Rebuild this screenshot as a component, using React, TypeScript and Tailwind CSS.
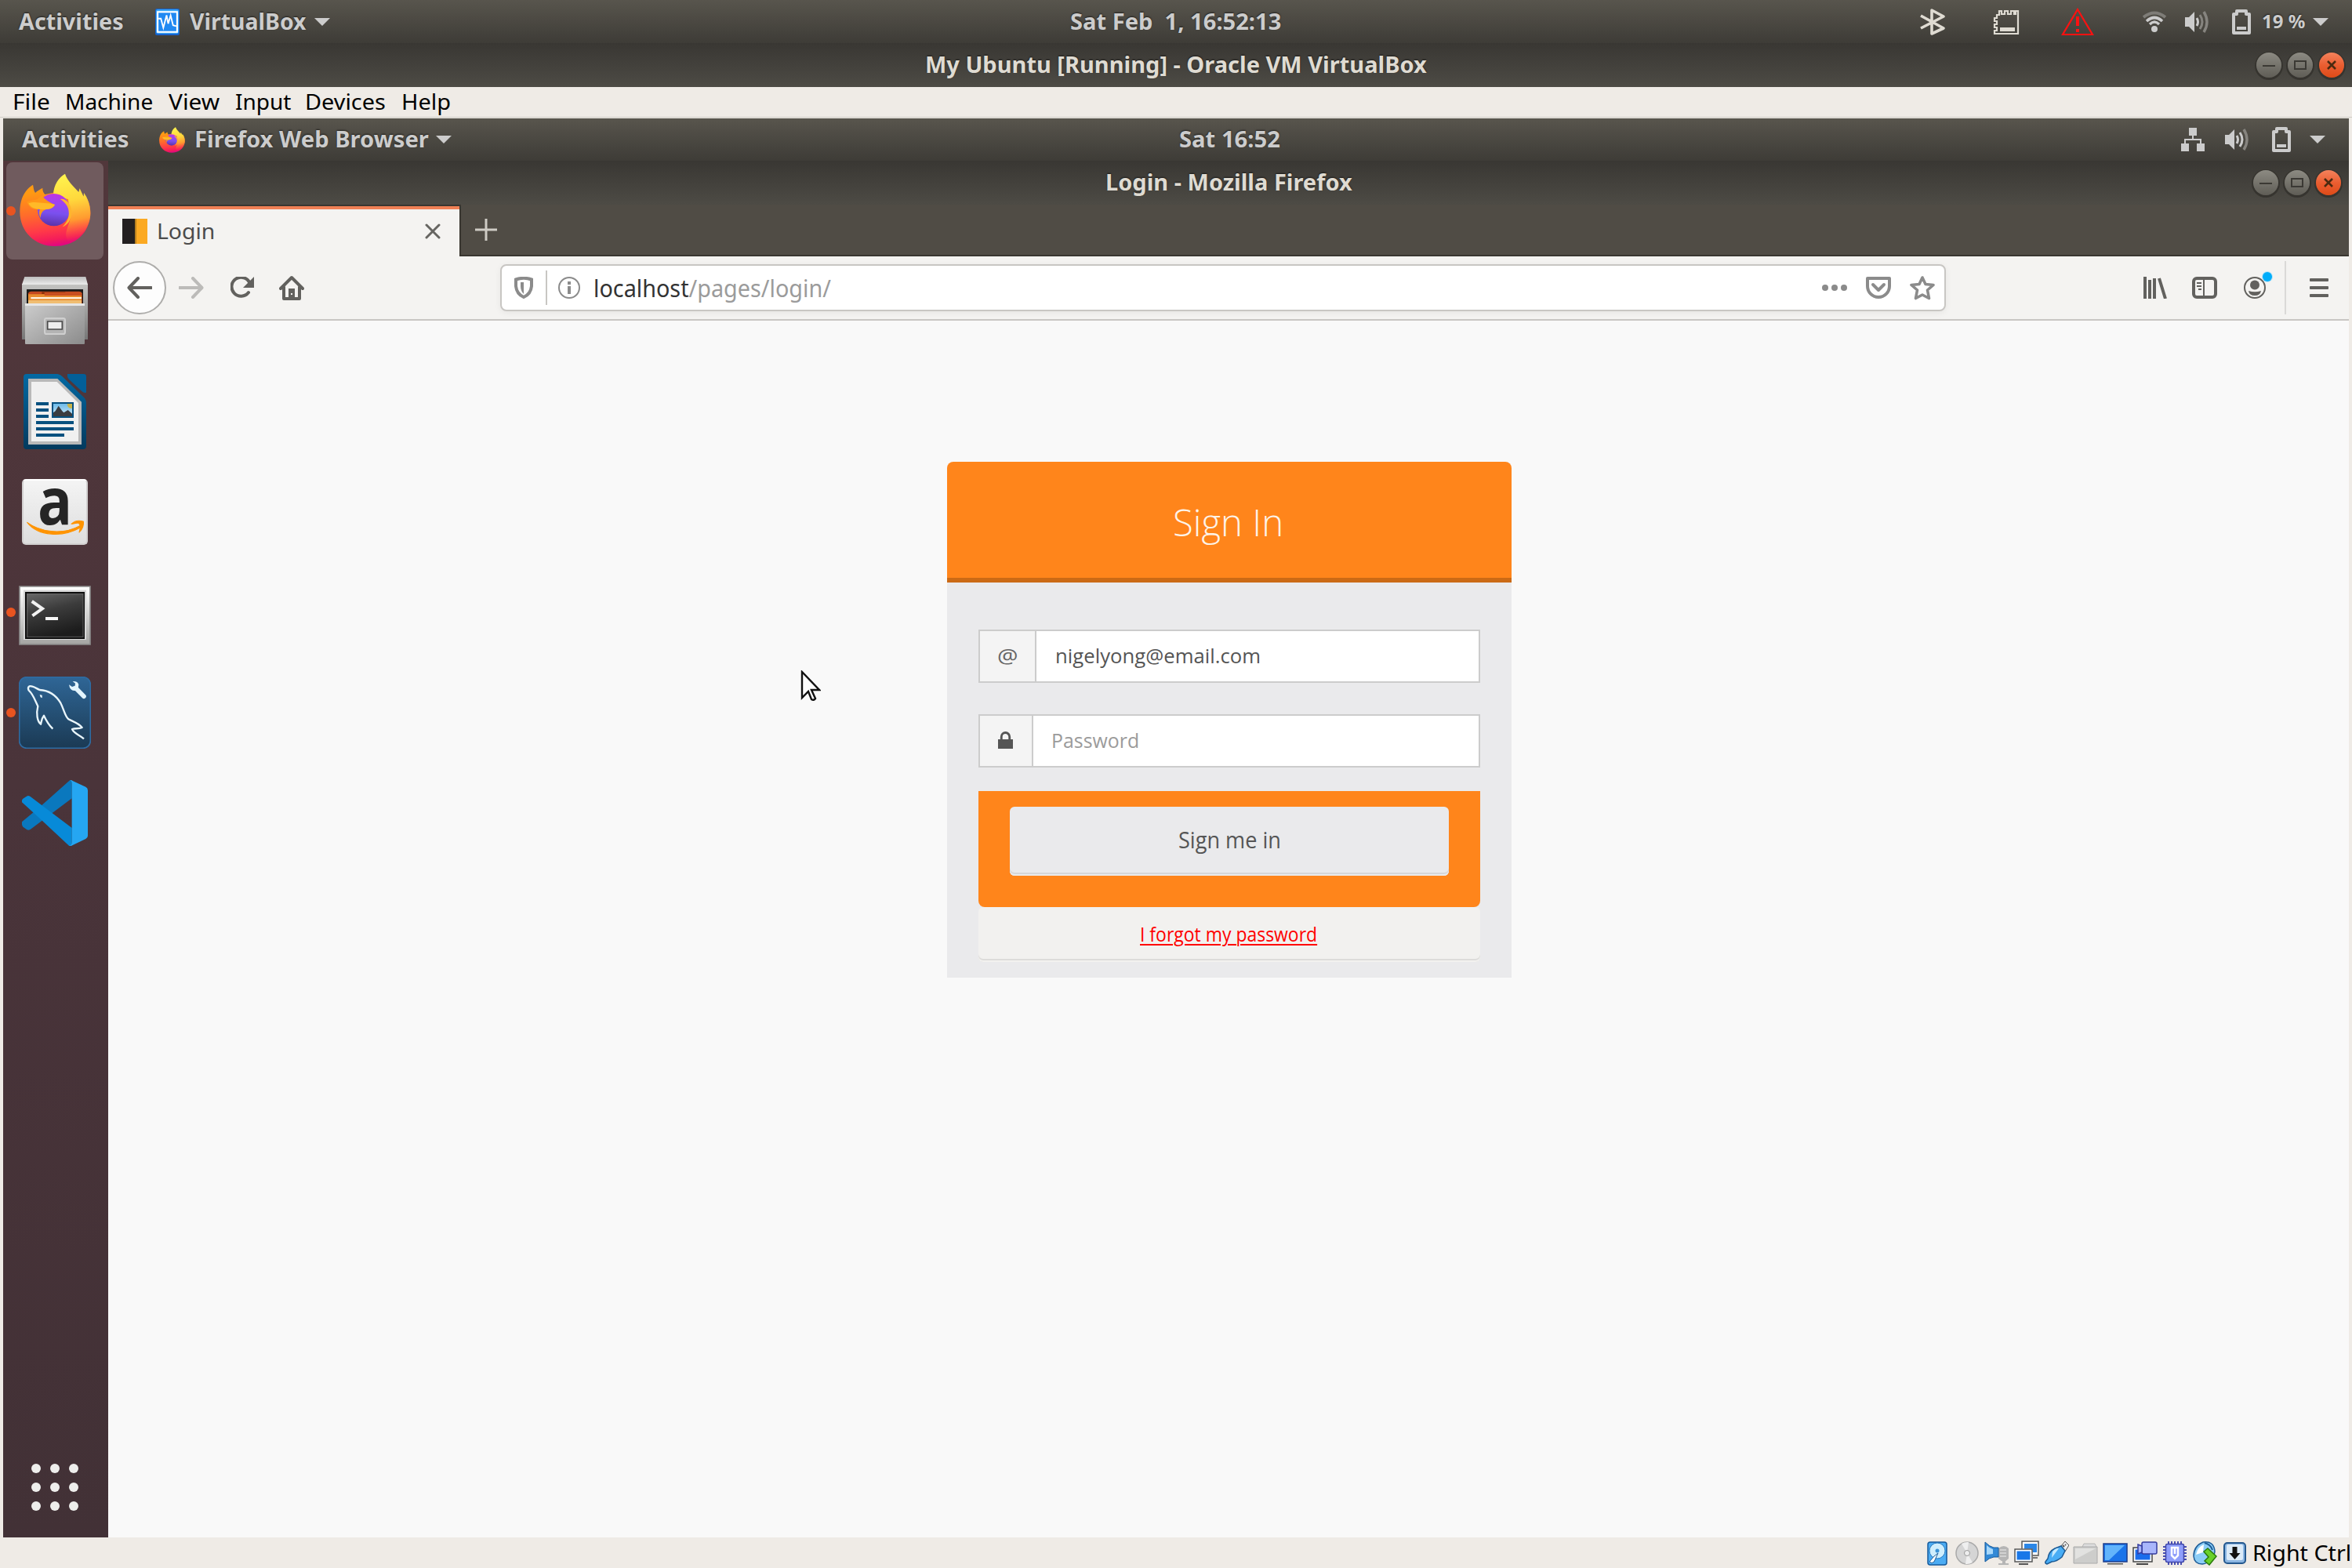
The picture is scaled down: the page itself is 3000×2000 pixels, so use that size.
import { useLayoutEffect, useRef, type ReactNode } from "react";

/* Text run condensed or widened to fill the width given by its class. */
function Fit({ className, textClass = "", children }: { className: string; textClass?: string; children: ReactNode }) {
  const outer = useRef<HTMLSpanElement>(null);
  const inner = useRef<HTMLSpanElement>(null);
  useLayoutEffect(() => {
    if (outer.current && inner.current) {
      const ratio = outer.current.clientWidth / inner.current.offsetWidth;
      inner.current.style.transform = `scaleX(${ratio})`;
    }
  });
  return (
    <span ref={outer} className={"block shrink-0 " + className}>
      <span ref={inner} className={"inline-block origin-left whitespace-pre " + textClass}>
        {children}
      </span>
    </span>
  );
}

function Svg({ vb, className, children }: { vb: string; className: string; children: ReactNode }) {
  return (
    <svg viewBox={vb} preserveAspectRatio="none" fill="none" className={"block shrink-0 " + className}>
      {children}
    </svg>
  );
}

const Caret = ({ className }: { className: string }) => (
  <Svg vb="0 0 20 10" className={"h-[10px] w-[20px] " + className}>
    <path d="M0 0h20L10 10z" fill="#ccc" />
  </Svg>
);

function Volume({ loud, className }: { loud?: boolean; className: string }) {
  return (
    <Svg vb="0 0 30 28" className={"h-[28px] w-[30px] " + className}>
      <path d="M0 8h5l7-7v26l-7-7H0z" fill="#ccc" />
      <path d="M15 9q3 5 0 10" stroke="#ccc" strokeWidth="3" />
      <path d="M19 5q6 9 0 18" stroke={loud ? "#ccc" : "#86847f"} strokeWidth="3" />
      <path d="M24 1q8 13 0 26" stroke="#86847f" strokeWidth="3.4" />
    </Svg>
  );
}

const Battery = ({ className }: { className: string }) => (
  <Svg vb="0 0 24 32" className={"h-[32px] w-[24px] " + className}>
    <path d="M2 30V6h4V2h12v4h4v24z" stroke="#ccc" strokeWidth="4" strokeLinejoin="round" />
    <path d="M6 22h12v4H6z" fill="#ccc" />
  </Svg>
);

function WindowButtons({ className }: { className: string }) {
  const base = "flex size-[32px] items-center justify-center rounded-full shadow-[0_1px_0_2px_#36342f]";
  const grey = base + " bg-linear-to-b from-[#8d8b83] to-[#5f5d56]";
  return (
    <div className={"flex shrink-0 gap-2 " + className}>
      <div className={grey}>
        <div className="mt-[2px] h-[2px] w-[16px] bg-[#3b3934]" />
      </div>
      <div className={grey}>
        <div className="h-[12px] w-[16px] border-2 border-[#3b3934]" />
      </div>
      <div className={base + " bg-linear-to-b from-[#f5825b] via-[#ea5e31] to-[#df4a16]"}>
        <Svg vb="0 0 12 12" className="size-[12px]">
          <path d="M1 1l10 10M11 1L1 11" stroke="#4b2a10" strokeWidth="2.6" />
        </Svg>
      </div>
    </div>
  );
}

function Firefox({ className, id }: { className: string; id: string }) {
  return (
    <Svg vb="76 91 273 282" className={className}>
      <defs>
        <linearGradient id={id + "b"} x1="0.35" y1="0.1" x2="0.5" y2="1">
          <stop offset="0" stopColor="#ff9a12" />
          <stop offset="0.4" stopColor="#ff6a2c" />
          <stop offset="0.7" stopColor="#ff3a48" />
          <stop offset="0.88" stopColor="#f41c5a" />
          <stop offset="1" stopColor="#e00683" />
        </linearGradient>
        <linearGradient id={id + "y"} x1="0.3" y1="0" x2="0.4" y2="1">
          <stop offset="0" stopColor="#fff44f" />
          <stop offset="0.4" stopColor="#ffd83c" />
          <stop offset="0.7" stopColor="#ff9a30" />
          <stop offset="1" stopColor="#ff4a44" stopOpacity="0" />
        </linearGradient>
        <linearGradient id={id + "g"} x1="0.5" y1="0" x2="0.4" y2="1">
          <stop offset="0" stopColor="#c034e4" />
          <stop offset="0.3" stopColor="#9a45f2" />
          <stop offset="0.6" stopColor="#7a50ee" />
          <stop offset="1" stopColor="#5a32a6" />
        </linearGradient>
      </defs>
      <path d="M127 135C130 146 129 156 136 166C143 158 154 153 164 147C163 157 167 166 173 172L206 165L300 163L335 190C348 215 349 245 345 262C335 330 280 370 210 370C135 370 77 315 77 238C77 190 95 155 127 135z" fill={`url(#${id}b)`} />
      <path d="M205 178C204 135 228 105 250 93C258 120 282 140 302 163L306 149C310 158 314 166 321 180L322 166C346 198 350 240 345 265C336 310 300 345 265 352C240 330 262 300 270 265L262 190z" fill={`url(#${id}y)`} />
      <circle cx="207" cy="231" r="62" fill={`url(#${id}g)`} />
      <path d="M173 172C160 176 150 183 145 190L104 200C112 225 130 232 154 228C150 238 150 250 156 262C157 240 168 231 180 228C196 228 205 222 211 211C195 205 178 195 165 182z" fill="#ff9718" />
      <path d="M110 206C130 198 150 204 170 205C185 206 198 206 211 211C205 223 196 228 180 229C150 232 120 228 110 206z" fill="#ffb928" />
      <path d="M232 190C250 186 272 205 275 235C276 270 258 290 240 296C264 272 268 248 262 226C258 212 246 200 232 190z" fill="#ffb52e" />
    </Svg>
  );
}

const RunningDot = ({ className }: { className: string }) => (
  <span className={"absolute top-1/2 left-[4px] size-[12px] rounded-full bg-[#e95420] " + className} />
);

function DockItem({ className, children }: { className: string; children: ReactNode }) {
  return <div className={"relative flex w-[134px] shrink-0 justify-center " + className}>{children}</div>;
}

function Dock() {
  return (
    <aside className="flex w-[134px] shrink-0 flex-col bg-linear-to-b from-[#51373b] via-[#4a343a] via-45% to-[#423136]">
      <DockItem className="mt-[2px] h-[124px]">
        <div className="ml-[-2px] h-[124px] w-[124px] rounded-lg bg-[#705b5e] pt-[14px] pl-[17px]">
          <Firefox id="dock" className="h-[94px] w-[91px]" />
        </div>
        <RunningDot className="-mt-[6px]" />
      </DockItem>
      <DockItem className="mt-[22px] h-[88px] pr-[2px]">
        <Svg vb="84 489 252 264" className="h-[88px] w-[84px]">
          <defs>
            <linearGradient id="cab" x1="0" y1="0" x2="0" y2="1"><stop stopColor="#c4c4c2" /><stop offset="1" stopColor="#777" /></linearGradient>
            <linearGradient id="drw" x1="0" y1="0" x2="1" y2="1"><stop stopColor="#cdcdcd" /><stop offset="1" stopColor="#8b8b8b" /></linearGradient>
            <linearGradient id="top" x1="0" y1="0" x2="0" y2="1"><stop stopColor="#bdbdbd" /><stop offset="1" stopColor="#ececec" /></linearGradient>
          </defs>
          <path d="M84 516h252v213H84z" fill="url(#cab)" />
          <path d="M94 489h234l8 30H84z" fill="url(#top)" />
          <path d="M102 537h216v60H102z" fill="#1c1c1c" />
          <path d="M108 553q2-8 12-8h182q10 0 12 8v44H108z" fill="#c4481f" />
          <path d="M160 547h90v8h-90z" fill="#8c2f08" />
          <path d="M108 556h204v40H108z" fill="#e88b2e" />
          <path d="M170 549h142v12H170z" fill="#c94f20" />
          <path d="M118 567h98v7h-98zM216 567h96v7h-96z" fill="#fff1e0" />
          <path d="M108 579h204v13H108z" fill="#f0bd72" />
          <rect x="96" y="591" width="228" height="156" rx="3" fill="url(#drw)" />
          <path d="M96 591h228v9H96z" fill="#e6e6e6" />
          <rect x="171" y="648" width="78" height="60" rx="7" fill="#b4b4b4" stroke="#cfcfcf" strokeWidth="6" />
          <path d="M182 660h56v30h-56z" fill="#ededed" stroke="#484848" strokeWidth="5" />
        </Svg>
      </DockItem>
      <DockItem className="mt-[36px] h-[96px] pr-[2px]">
        <Svg vb="90 861 240 288" className="h-[96px] w-[80px]">
          <defs>
            <linearGradient id="wr" x1="0" y1="0" x2="0" y2="1"><stop stopColor="#0369a3" /><stop offset="1" stopColor="#033a5e" /></linearGradient>
            <linearGradient id="sky" x1="0" y1="0" x2="0" y2="1"><stop stopColor="#67b7e8" /><stop offset="1" stopColor="#d5edf8" /></linearGradient>
          </defs>
          <path d="M102 861H220Q232 863 240 872L322 952Q330 960 330 972V1137Q330 1149 318 1149H102Q90 1149 90 1137V873Q90 861 102 861z" fill="url(#wr)" />
          <path d="M258 861H320Q330 861 330 871V932Q322 936 312 926L264 882Q256 874 258 861z" fill="#035f98" />
          <path d="M108 879H220L312 968V1131H108z" fill="#b9b9b9" />
          <path d="M120 891H218L300 972V1119H120z" fill="#f0f0f0" />
          <path d="M138 969h48v12h-48zM138 993h48v12h-48zM138 1017h48v12h-48zM138 1041h144v12H138zM138 1065h144v12H138zM138 1089h108v12H138z" fill="#07507f" />
          <path d="M201 972h78v54h-78z" fill="url(#sky)" stroke="#07507f" strokeWidth="6" />
          <path d="M257 975h19v18q-19 0-19-18z" fill="#c8b44a" />
          <path d="M204 1023v-14l8-6 12-20 14 20 6 6 16-10 16 14v10z" fill="#3a3c40" />
        </Svg>
      </DockItem>
      <DockItem className="mt-[38px] h-[84px] pr-[2px]">
        <div className="flex h-[84px] w-[84px] flex-col items-center rounded-[5px] border-2 border-[#d2d0d0] border-t-white bg-linear-to-b from-[#f4f4f4] to-[#dedede]">
          <Fit className="h-[50px] w-[44px] font-['Open_Sans',sans-serif] text-[83px] leading-[48px] font-bold text-[#252525]">a</Fit>
          <Svg vb="102 1420 218 60" className="h-[20px] w-[73px]">
            <path d="M104 1430C150 1464 235 1482 306 1442L300 1432C285 1434 278 1436 272 1436C286 1422 305 1422 319 1427C319 1444 314 1458 302 1468L306 1450C240 1488 145 1484 104 1430z" fill="#ff9400" stroke="#ff9400" strokeWidth="3" strokeLinejoin="round" />
          </Svg>
        </div>
      </DockItem>
      <DockItem className="mt-[52px] h-[76px] pr-[2px]">
        <RunningDot className="-mt-[10px]" />
        <Svg vb="72 141 276 228" className="h-[76px] w-[92px]">
          <defs>
            <linearGradient id="tf" x1="0" y1="0" x2="0" y2="1"><stop stopColor="#fff" /><stop offset="1" stopColor="#a4a4a2" /></linearGradient>
            <linearGradient id="ts" x1="0" y1="0" x2="0.3" y2="1"><stop stopColor="#6a6a6a" /><stop offset="0.45" stopColor="#3c3c3c" /><stop offset="1" stopColor="#1c1c1c" /></linearGradient>
          </defs>
          <path d="M75 144h270v222H75z" fill="url(#tf)" stroke="#8c8c8c" strokeWidth="5" />
          <path d="M90 158h240v190H90z" fill="#d6d6d6" />
          <path d="M99 168h222v174H99z" fill="url(#ts)" stroke="#0e0e0e" strokeWidth="6" />
          <path d="M104 173h214v164H104z" stroke="#6e6e6e" strokeOpacity="0.6" strokeWidth="4" />
          <path d="M122 201L162 229L124 256" stroke="#f2f2f2" strokeWidth="12" />
          <path d="M174 261h48v12h-48z" fill="#f8f8f8" />
        </Svg>
      </DockItem>
      <DockItem className="mt-[40px] h-[92px] pr-[2px]">
        <RunningDot className="-mt-[6px]" />
        <Svg vb="72 489 276 276" className="h-[92px] w-[92px]">
          <defs>
            <linearGradient id="my" x1="0" y1="0" x2="0" y2="1"><stop stopColor="#2f6696" /><stop offset="1" stopColor="#1b3a54" /></linearGradient>
          </defs>
          <rect x="74" y="491" width="272" height="272" rx="28" fill="url(#my)" stroke="#2e6ca3" strokeWidth="5" />
          <path d="M110 542C104 528 112 522 124 527C135 530 142 536 152 540C190 542 215 562 232 590C245 615 248 640 262 652C280 662 298 664 314 684C300 690 288 686 276 690C284 708 305 712 321 727M110 542C126 555 134 580 145 602C138 630 142 660 156 671C160 655 160 648 168 638C178 660 188 675 202 689" stroke="#e9f6fc" strokeWidth="7" strokeLinejoin="round" />
          <path d="M152 558l9 2v11l-6-3z" fill="#e9f6fc" />
          <path d="M290 533l31 32" stroke="#e3f4fd" strokeWidth="17" strokeLinecap="round" />
          <path d="M278 507Q298 506 301 520L299 534L288 543Q268 546 264 520L276 528L287 524L288 515z" fill="#e3f4fd" />
        </Svg>
      </DockItem>
      <DockItem className="mt-[40px] h-[84px] pr-[2px]">
        <Svg vb="84 885 252 252" className="h-[84px] w-[84px]">
          <path d="M268 885L150 990L84 1045Q82 1056 88 1064L102 1074Q108 1078 116 1074L275 955V887z" fill="#0a78be" />
          <path d="M84 970Q82 962 88 956L102 947Q108 943 116 948L275 1068V1134Q270 1138 264 1136L150 1030z" fill="#078ad8" />
          <path d="M268 885Q272 884 278 888L328 911Q336 915 336 924V1098Q336 1106 328 1110L278 1134Q272 1138 264 1136Q275 1138 275 1120V900Q275 886 268 885z" fill="#25a6f2" />
        </Svg>
      </DockItem>
      <div className="mt-auto mb-[34px] ml-[36px] grid w-[60px] grid-cols-3 gap-3">
        {Array.from({ length: 9 }, (_, i) => (
          <span key={i} className="size-[12px] rounded-full bg-[#eeeeec]" />
        ))}
      </div>
    </aside>
  );
}

function HostPanel() {
  return (
    <header className="flex h-[55px] shrink-0 items-center bg-linear-to-b from-[#58554d] to-[#3e3c37] font-['Noto_Sans',sans-serif] text-[29px] leading-[54px] font-bold text-[#ccc] [text-shadow:0_-1px_2px_rgba(0,0,0,.6)]">
      <div className="flex w-[1365px] items-center">
        <Fit className="ml-[24px] h-[55px] w-[134px]">Activities</Fit>
        <Svg vb="0 0 30 32" className="ml-[40px] h-[34px] w-[31px]">
          <rect width="30" height="32" rx="2" fill="#1462cf" />
          <rect x="1" y="1" width="28" height="29" rx="2" fill="#3fa9f8" />
          <rect x="3" y="4" width="24" height="24" fill="#2089f2" stroke="#fff" strokeWidth="2" />
          <path d="M4 12h3l3 11 4-15 2 10 3-10 3 12 4 1" stroke="#fff" strokeWidth="1.8" />
        </Svg>
        <Fit className="ml-[13px] h-[55px] w-[149px]">VirtualBox</Fit>
        <Caret className="ml-[10px]" />
      </div>
      <Fit className="h-[55px] w-[269px]">{"Sat Feb  1, 16:52:13"}</Fit>
      <div className="ml-auto flex items-center pr-[30px]">
        <Svg vb="0 0 34 34" className="h-[34px] w-[34px]">
          <path d="M2 9L31 25L16 32V2L31 10L2 25" stroke="#dfdbd2" strokeWidth="3.6" strokeLinejoin="round" />
        </Svg>
        <Svg vb="0 0 34 34" className="ml-[60px] h-[34px] w-[34px]">
          <path d="M8 8V3h3v4h4V3h4v4h4V3h4v4h2V3h3v29H2v-4h3v-4H2v-4h3v-4H2v-4h3V8z" stroke="#dfdbd2" strokeWidth="2.2" />
          <path d="M9 24h19v5H9z" fill="#dfdbd2" />
        </Svg>
        <Svg vb="0 0 42 36" className="ml-[53px] h-[36px] w-[42px]">
          <path d="M21 2L40 34H2z" stroke="#f11" strokeWidth="2.2" />
          <path d="M19 11h4v12h-4zM19 27h4v4h-4z" fill="#f11" />
        </Svg>
        <Svg vb="0 0 30 28" className="ml-[62px] h-[28px] w-[30px]">
          <path d="M1 8Q15-3 29 8" stroke="#7e7c77" strokeWidth="4" />
          <path d="M5 13Q15 4 25 13" stroke="#ccc" strokeWidth="3.6" />
          <path d="M9 17Q15 11 21 17" stroke="#ccc" strokeWidth="3.4" />
          <circle cx="15" cy="23" r="4" fill="#ccc" />
        </Svg>
        <Volume className="ml-[24px]" />
        <Battery className="ml-[30px]" />
        <Fit className="ml-[14px] h-[55px] w-[55px] text-[24px]">19 %</Fit>
        <Caret className="ml-[10px]" />
      </div>
    </header>
  );
}

function HostTitle() {
  return (
    <div className="flex h-[56px] shrink-0 items-center bg-linear-to-b from-[#393733] to-[#4d4b45] font-['Noto_Sans',sans-serif] text-[29px] leading-[53px] font-bold text-[#dfdbd2] [text-shadow:0_-1px_2px_rgba(0,0,0,.6)]">
      <Fit className="ml-[1180px] h-[56px] w-[640px]">My Ubuntu [Running] - Oracle VM VirtualBox</Fit>
      <WindowButtons className="mr-[10px] ml-auto" />
    </div>
  );
}

function MenuBar() {
  return (
    <nav className="flex h-[38px] shrink-0 bg-[#efebe6] font-['Noto_Sans',sans-serif] text-[28px] leading-[36px] text-black">
      <Fit className="ml-[16px] w-[48px]">File</Fit>
      <Fit className="ml-[19px] w-[112px]">Machine</Fit>
      <Fit className="ml-[20px] w-[65px]">View</Fit>
      <Fit className="ml-[20px] w-[71px]">Input</Fit>
      <Fit className="ml-[18px] w-[103px]">Devices</Fit>
      <Fit className="ml-[20px] w-[63px]">Help</Fit>
    </nav>
  );
}

function GuestPanel() {
  return (
    <div className="flex h-[54px] shrink-0 items-center bg-linear-to-b from-[#58554d] to-[#3e3c37] font-['Noto_Sans',sans-serif] text-[29px] leading-[52px] font-bold text-[#ccc] [text-shadow:0_-1px_2px_rgba(0,0,0,.6)]">
      <div className="flex w-[1500px] items-center">
        <Fit className="ml-[24px] h-[54px] w-[137px]">Activities</Fit>
        <Firefox id="panel" className="ml-[38px] h-[33px] w-[33px]" />
        <Fit className="ml-[12px] h-[54px] w-[299px]">Firefox Web Browser</Fit>
        <Caret className="ml-[9px]" />
      </div>
      <Fit className="h-[54px] w-[129px]">Sat 16:52</Fit>
      <div className="ml-auto flex items-center pr-[30px]">
        <Svg vb="0 0 30 30" className="h-[30px] w-[30px]">
          <path d="M10 0h10v10H10zM0 20h10v10H0zM20 20h10v10H20z" fill="#ccc" />
          <path d="M15 10v5M5 20v-5h20v5" stroke="#ccc" strokeWidth="2" />
        </Svg>
        <Volume loud className="ml-[26px]" />
        <Battery className="ml-[30px]" />
        <Caret className="ml-[24px]" />
      </div>
    </div>
  );
}

function Browser() {
  return (
    <div className="flex min-w-0 grow flex-col bg-[#f9f9f9] font-['Noto_Sans',sans-serif]">
      <div className="flex h-[56px] shrink-0 items-center bg-linear-to-b from-[#393733] to-[#4d4b45] text-[29px] leading-[53px] font-bold text-[#dfdbd2] [text-shadow:0_-1px_2px_rgba(0,0,0,.6)]">
        <Fit className="ml-[1272px] h-[56px] w-[315px]">Login - Mozilla Firefox</Fit>
        <WindowButtons className="mr-[10px] ml-auto" />
      </div>
      {/* tab strip */}
      <div className="flex h-[66px] shrink-0 bg-[#504c45]">
        <div className="flex h-[66px] w-[450px] items-center border-t-2 border-r-2 border-[#393630] bg-[#f4f3f1] shadow-[inset_0_4px_0_#f08055]">
          <div className="ml-[18px] flex h-[32px] w-[32px]">
            <div className="w-[16px] bg-[#231f20]" />
            <div className="w-[2px] bg-[#b8801f]" />
            <div className="w-[14px] bg-[#fba922]" />
          </div>
          <Fit className="ml-[12px] w-[74px] pb-[2px] text-[28px] leading-[60px] text-[#4c4c4c]">Login</Fit>
          <Svg vb="0 0 20 20" className="mr-[24px] ml-auto h-[20px] w-[20px]">
            <path d="M2 2l16 16M18 2L2 18" stroke="#666561" strokeWidth="3" strokeLinecap="round" />
          </Svg>
        </div>
        <div className="flex grow border-b-2 border-[#393630] pt-[18px]">
          <Svg vb="0 0 28 28" className="ml-[18px] h-[28px] w-[28px]">
            <path d="M14 0v28M0 14h28" stroke="#cfccc5" strokeWidth="3" />
          </Svg>
        </div>
      </div>
      {/* navigation toolbar */}
      <div className="flex h-[82px] shrink-0 items-center border-b-2 border-[#c8c6c3] bg-[#f4f3f1]">
        <div className="ml-[6px] flex size-[68px] items-center justify-center rounded-full border-2 border-[#aeadab] bg-[#fdfdfd]">
          <Svg vb="0 0 32 28" className="h-[28px] w-[32px]">
            <path d="M31 14H3M14 2L2.5 14L14 26" stroke="#62615e" strokeWidth="4" strokeLinecap="round" strokeLinejoin="round" />
          </Svg>
        </div>
        <Svg vb="0 0 32 28" className="ml-[16px] h-[28px] w-[32px]">
          <path d="M1 14h28M18 2l11.500 12L18 26" stroke="#bcbbb9" strokeWidth="4" strokeLinecap="round" strokeLinejoin="round" />
        </Svg>
        <Svg vb="0 0 30 28" className="ml-[34px] h-[28px] w-[30px]">
          <path d="M23 20A12 12 0 1 1 24.500 8" stroke="#62615e" strokeWidth="4" strokeLinecap="round" />
          <path d="M30 0v14H16z" fill="#62615e" />
        </Svg>
        <Svg vb="0 0 32 32" className="ml-[32px] h-[32px] w-[32px]">
          <path d="M2 17L16 3L30 17M6 15v15h20V15" stroke="#62615e" strokeWidth="4" strokeLinecap="round" strokeLinejoin="round" />
          <path d="M12 17h8v13h-8z" fill="#62615e" />
          <path d="M15 23h2v2h-2z" fill="#f4f3f1" />
        </Svg>
        <div className="ml-[250px] flex h-[60px] w-[1844px] shrink-0 items-center rounded-lg border-2 border-[#c8c6c3] bg-white shadow-[0_2px_8px_rgba(0,0,0,.06)]">
          <Svg vb="0 0 24 28" className="ml-[16px] h-[28px] w-[24px]">
            <path d="M2 3.500Q12 0 22 3.500V12Q21 22 12 26Q3 22 2 12z" stroke="#8b8b8b" strokeWidth="4" />
            <path d="M8 7h4v15Q8 18 8 12z" fill="#8b8b8b" />
          </Svg>
          <div className="ml-[16px] h-[44px] w-[2px] bg-[#c8c6c3]" />
          <Svg vb="0 0 28 28" className="ml-[14px] h-[28px] w-[28px]">
            <circle cx="14" cy="14" r="13" stroke="#8b8b8b" strokeWidth="2" />
            <path d="M12 6h4v4h-4zM12 12h4v10h-4z" fill="#8b8b8b" />
          </Svg>
          <Fit className="ml-[17px] w-[303px] pt-px text-[30px] leading-[56px] text-[#9b9b9b]">
            <span className="text-[#333]">localhost</span>/pages/login/
          </Fit>
          <Svg vb="0 0 32 8" className="ml-auto h-[8px] w-[32px]">
            <g fill="#8b8b8b"><circle cx="4" cy="4" r="4" /><circle cx="16" cy="4" r="4" /><circle cx="28" cy="4" r="4" /></g>
          </Svg>
          <Svg vb="0 0 32 28" className="ml-[24px] h-[28px] w-[32px]">
            <path d="M2 2h28v10a14 14 0 0 1-28 0z" stroke="#8b8b8b" strokeWidth="4" strokeLinejoin="round" />
            <path d="M9 10l7 7 7-7" stroke="#8b8b8b" strokeWidth="4" strokeLinecap="round" strokeLinejoin="round" />
          </Svg>
          <Svg vb="0 0 32 32" className="mr-[12px] ml-[24px] h-[32px] w-[32px]">
            <path d="M16 3l4 8.500 10 1-7.500 6.500 2 10.500-8.500-4.500-8.500 4.500 2-10.500L2 12.500l10-1z" stroke="#8b8b8b" strokeWidth="3.600" strokeLinejoin="round" />
          </Svg>
        </div>
        <Svg vb="0 0 30 28" className="ml-[252px] h-[28px] w-[30px]">
          <path d="M2 0v28M8 4v24M14 2v26M20 2l8 26" stroke="#62615e" strokeWidth="4" />
        </Svg>
        <Svg vb="0 0 32 28" className="ml-[32px] h-[28px] w-[32px]">
          <rect x="2" y="2" width="28" height="24" rx="4" stroke="#62615e" strokeWidth="4" />
          <path d="M15 3v22M6 8h6M6 12h6M8 16h4" stroke="#62615e" strokeWidth="2" />
        </Svg>
        <div className="relative ml-[34px]">
          <Svg vb="0 0 28 28" className="h-[28px] w-[28px]">
            <circle cx="14" cy="14" r="13" stroke="#62615e" strokeWidth="2" />
            <circle cx="14" cy="10.500" r="6" fill="#62615e" />
            <path d="M6 18q8 2.500 16 0-1 6-8 6t-8-6z" fill="#62615e" />
          </Svg>
          <span className="absolute -top-[6px] left-[24px] size-[12px] rounded-full bg-[#00adfa] shadow-[0_0_0_1px_#b8e4f8]" />
        </div>
        <div className="ml-[24px] h-[68px] w-[2px] bg-[#dad9d7]" />
        <div className="ml-[30px] flex h-[24px] w-[24px] flex-col justify-between">
          <div className="h-[4px] rounded-[1px] bg-[#62615e]" />
          <div className="h-[4px] rounded-[1px] bg-[#62615e]" />
          <div className="h-[4px] rounded-[1px] bg-[#62615e]" />
        </div>
      </div>
      <LoginCard />
    </div>
  );
}

function LoginCard() {
  return (
    <main className="mt-[180px] ml-[1070px] w-[720px] font-['Open_Sans',sans-serif] text-[#555]">
      <div className="flex h-[154px] justify-center rounded-t-lg border-b-6 border-[#cb6a15] bg-[#ff851b] pr-[3px] text-[47px] leading-[155px] font-light text-[#fdf3e8]">
        <Fit className="w-[141px]">Sign In</Fit>
      </div>
      <div className="h-[504px] bg-[#eaeaec] px-[40px] pt-[60px]">
        <div className="flex h-[68px] border-2 border-[#ccc] bg-white text-[25px] leading-[63px]">
          <div className="w-[72px] border-r-2 border-[#ccc] bg-[#f4f4f4] pl-[22px]">
            <Fit className="w-[26px] text-[#666]">@</Fit>
          </div>
          <Fit className="ml-[24px] w-[262px] text-[26px]">nigelyong@email.com</Fit>
        </div>
        <div className="mt-[40px] flex h-[68px] border-2 border-[#ccc] bg-white">
          <div className="w-[68px] border-r-2 border-[#ccc] bg-[#f4f4f4] pt-[20px] pl-[23px]">
            <Svg vb="0 0 20 22" className="h-[22px] w-[19px]">
              <path d="M0 10h20v12H0z" fill="#555" />
              <path d="M4.500 12V7a5.500 5.500 0 0 1 11 0v5" stroke="#555" strokeWidth="3" />
            </Svg>
          </div>
          <Fit className="ml-[23px] w-[112px] text-[26px] leading-[63px] text-[#9b9b9b]">Password</Fit>
        </div>
        <div className="mt-[30px] h-[148px] rounded-b-lg bg-[#ff851b] px-[40px] pt-[20px]">
          <div className="flex h-[88px] justify-center rounded-md bg-[#eaeaec] text-[30px] leading-[84px] shadow-[inset_0_-2px_0_#eaeaec,inset_0_-4px_0_#d6d6d8]">
            <Fit className="w-[131px]">Sign me in</Fit>
          </div>
        </div>
        <div className="flex h-[70px] justify-center rounded-md bg-[#f2f1ef] shadow-[inset_0_-2px_0_#f2f1ef,inset_0_-4px_0_#dddcda]">
          <Fit
            className="mr-[2px] w-[226px] text-[26px] leading-[68px] text-[#f00]"
            textClass="underline decoration-2 underline-offset-[3px]"
          >
            I forgot my password
          </Fit>
        </div>
      </div>
    </main>
  );
}

const statusIcons: ReactNode[] = [
  <>
    <rect x="4" y="2" width="24" height="29" rx="3" fill="#4cacf3" stroke="#145a9c" strokeWidth="1.500" />
    <circle cx="16" cy="13" r="10" fill="#cfeefd" stroke="#2a7dc2" />
    <circle cx="16" cy="13" r="2.500" fill="#3b93d6" />
    <path d="M17 16l-5 4-6 7q3 3 6 0z" fill="#fff" stroke="#1d5f9c" />
  </>,
  <>
    <circle cx="16" cy="16" r="14" fill="#d5d5d5" stroke="#aaa" strokeWidth="1.500" />
    <path d="M16 16L9 4a14 14 0 0 1 9-2zM16 16l7 12a14 14 0 0 1-9 2z" fill="#efefef" />
    <circle cx="16" cy="16" r="3.500" fill="#eee" stroke="#999" />
  </>,
  <>
    <path d="M18 10q7-6 13 0v13q-6 7-13 0zM23 25h4v4h4v2H18v-2h5z" fill="#b5b5b5" />
    <path d="M20 12h8M20 16h8M20 20h8" stroke="#eee" />
    <path d="M1 2q6 6 11 7h6v12h-6q-6 1-11 6z" fill="#3289d6" stroke="#155a9c" />
    <path d="M3 6q4 4 8 5v6l-8 1z" fill="#a8d8fa" />
  </>,
  <>
    <path d="M11 2h20v15H11z" fill="#2b86e6" stroke="#fff" strokeWidth="4" />
    <path d="M10 1h21v18H10z" stroke="#555" strokeWidth="1.500" />
    <path d="M24 21h6v2h-6z" fill="#777" />
    <path d="M2 12h20v14H2z" fill="#1877e8" stroke="#fff" strokeWidth="3" />
    <path d="M1 11h22v16H1z" stroke="#555" strokeWidth="1.500" />
    <path d="M6 29h12v2H6z" fill="#555" />
  </>,
  <>
    <path d="M21 8l6-7 5 5-5 8z" fill="#eee" stroke="#555" />
    <path d="M24 6l2 2M27 5l1 1" stroke="#555" strokeWidth="2" />
    <path d="M14 10l8-3 5 6-4 8q-7 6-13 6l-6 3q-3-1-2-3l3-4q1-9 9-13z" fill="#48adf5" stroke="#1c5a94" strokeWidth="1.500" />
    <path d="M11 14q5-5 8-4l-9 12z" fill="#c4eaff" />
  </>,
  <>
    <path d="M12 8l2-4h14l2 4v20H12z" fill="#ddd" stroke="#b5b5b5" />
    <path d="M1 8h30v21H1z" fill="#cdcdcb" stroke="#aaa" />
    <path d="M3 10h26L3 24z" fill="#e2e2e0" />
  </>,
  <>
    <path d="M1 4h30v23H1z" fill="#1a74ea" stroke="#1c3c8a" strokeWidth="1.500" />
    <path d="M3 6h25L8 25H3z" fill="#62b4fb" />
    <path d="M6 29h20v1.500H6z" fill="#555" />
  </>,
  <>
    <path d="M2 10h22v16H2z" fill="#1a6cec" stroke="#fff" strokeWidth="3" />
    <path d="M1 9h24v18H1z" stroke="#444" strokeWidth="1.500" />
    <path d="M5 30h15" stroke="#444" strokeWidth="2" />
    <rect x="12" y="2" width="19" height="15" rx="2" fill="#a9b6fb" stroke="#353ca0" strokeWidth="1.500" />
    <path d="M7 5l5 2v8l-5 2z" fill="#a9b6fb" stroke="#353ca0" strokeWidth="1.500" />
  </>,
  <>
    <path d="M8 1v30M12 1v30M16 1v30M20 1v30M24 1v30M1 8h30M1 12h30M1 16h30M1 20h30M1 24h30" stroke="#4a4fb0" strokeWidth="2" />
    <rect x="4.500" y="4.500" width="23" height="23" rx="2" fill="#8f9efb" stroke="#3f46a8" strokeWidth="1.500" />
    <path d="M12 9h8v10l-4 4-4-4zM16 9v8" stroke="#fff" strokeWidth="2.500" />
  </>,
  <>
    <path d="M2 20q0-13 12-18 14-2 15 12-2 14-16 16-10 0-11-10z" fill="#8ccdf6" stroke="#1e5c96" strokeWidth="1.500" />
    <path d="M5 18q2-10 10-13l-1 10z" fill="#fff" />
    <path d="M16 3q8 2 10 9" stroke="#1e5c96" strokeWidth="2" />
    <path d="M15 14l5-4 11 10-9 11-6-5 5-5z" fill="#69d12a" stroke="#2a7a0c" strokeWidth="1.500" />
  </>,
  <>
    <rect x="3" y="3" width="27" height="26" rx="4" fill="#8cb6e2" stroke="#24588e" strokeWidth="2" />
    <rect x="6" y="5" width="21" height="20" rx="2" fill="#dcebf8" />
    <path d="M13.500 8h6v8h4l-7 8-7-8h4z" fill="#111" />
  </>,
];

function StatusBar() {
  return (
    <footer className="flex h-[39px] shrink-0 items-center bg-[#efebe6] pl-[2452px] font-['Noto_Sans',sans-serif] text-[28px] leading-[38px] text-black">
      {statusIcons.map((icon, i) => (
        <div key={i} className="flex w-[37.9px] shrink-0 justify-center">
          <Svg vb="0 0 32 32" className="size-[32px]">{icon}</Svg>
        </div>
      ))}
      <Fit className="ml-[4px] h-[39px] w-[126px]">Right Ctrl</Fit>
    </footer>
  );
}

export default function App() {
  return (
    <div className="relative flex h-[2000px] w-[3000px] flex-col overflow-hidden bg-[#efebe6]">
      <HostPanel />
      <HostTitle />
      <MenuBar />
      <div className="flex h-[1812px] shrink-0 flex-col border-t border-[#cfccc6] px-[4px] pt-[1px]">
        <GuestPanel />
        <div className="flex min-h-0 grow">
          <Dock />
          <Browser />
        </div>
      </div>
      <StatusBar />
      <Svg vb="0 0 26 40" className="absolute top-[855px] left-[1021px] h-[40px] w-[26px]">
        <path d="M2 2v33l8-8 4 10q3 2 5-1l-5-11h10z" fill="#fdfdfd" stroke="#111" strokeWidth="2.400" />
      </Svg>
    </div>
  );
}
